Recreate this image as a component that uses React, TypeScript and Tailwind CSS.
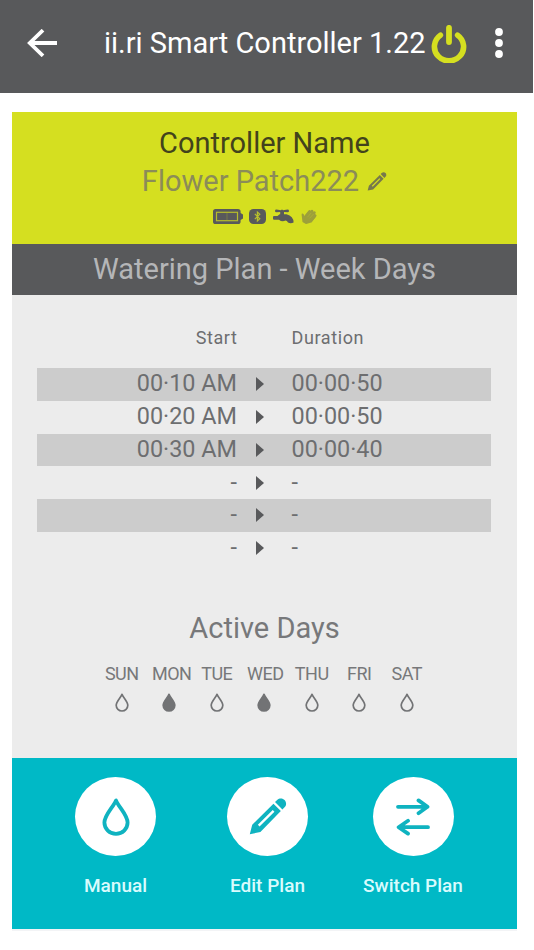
import React from "react";

const plan = [
  { start: "00·10 AM", duration: "00·00·50" },
  { start: "00·20 AM", duration: "00·00·50" },
  { start: "00·30 AM", duration: "00·00·40" },
  { start: "-", duration: "-" },
  { start: "-", duration: "-" },
  { start: "-", duration: "-" },
];

const days = [
  { name: "SUN", active: false, pad: "" },
  { name: "MON", active: true, pad: "pl-[5px]" },
  { name: "TUE", active: false, pad: "" },
  { name: "WED", active: true, pad: "pl-[2px]" },
  { name: "THU", active: false, pad: "" },
  { name: "FRI", active: false, pad: "" },
  { name: "SAT", active: false, pad: "" },
];

function Pencil({ className }: { className: string }) {
  return (
    <svg viewBox="0 0 38 38" className={className} fill="currentColor">
      <path
        fillRule="evenodd"
        d="M0.3 37.2 L2.8 27.4 L24.6 5.8 L32.2 13.4 L11.2 35 Z M8.6 27.6 L10.3 29.3 L25.6 14.1 L23.9 12.4 Z"
      />
      <path d="M26.2 4.2 L28.4 2 C31 -0.4 34.4 0.4 36 2 C37.8 3.8 38.4 7 36 9.6 L33.8 11.8 Z" />
    </svg>
  );
}

function Drop({ active }: { active: boolean }) {
  return (
    <svg
      viewBox="0 0 14 19"
      className="mt-[7px] h-[19px] w-[14px]"
      fill={active ? "#727375" : "none"}
      stroke="#727375"
      strokeWidth="1.7"
      strokeLinejoin="round"
    >
      <path d="M7 1.3 C5.6 5 1.2 8.6 1.2 12.3 A5.8 5.7 0 0 0 12.8 12.3 C12.8 8.6 8.4 5 7 1.3 Z" />
    </svg>
  );
}

function StatusIcons() {
  return (
    <div className="flex h-[16px] items-center text-[#58595b]">
      <svg viewBox="0 0 30 15" className="h-[15px] w-[30px]" fill="currentColor">
        <path d="M2.5 0 H25 Q27.6 0 27.6 2.6 V4 L30 5.4 V9.6 L27.6 11 V12.4 Q27.6 15 25 15 H2.5 Q0 15 0 12.4 V2.6 Q0 0 2.5 0 Z" />
        <rect
          x="3.5"
          y="3.3"
          width="21"
          height="8.4"
          fill="none"
          stroke="#b5bc2c"
          strokeWidth="1.2"
        />
        <path d="M14 4 V11" stroke="#7d8046" strokeWidth="0.8" />
      </svg>
      <svg viewBox="0 0 17 15" className="ml-[6.5px] h-[15px] w-[17px]">
        <rect width="17" height="15" rx="4.5" fill="currentColor" />
        <path
          d="M5.8 4.8 L10.8 9.8 L8.4 12 V3 L10.8 5.2 L5.8 10.2"
          fill="none"
          stroke="#b9c02c"
          strokeWidth="1.2"
        />
      </svg>
      <svg
        viewBox="0 0 21 15"
        className="ml-[6.5px] h-[15px] w-[21px]"
        fill="currentColor"
      >
        <path d="M2 2 Q2 0.6 3.5 0.6 L8 1.2 Q9 0 10 1.2 L14.5 0.6 Q16 0.6 16 2 Q16 3.2 14.5 3.2 L11 3 V5.2 H13.5 Q20.5 7 20.6 13.5 Q17.5 15 15 13.4 Q14 11.6 12.5 11.6 Q9 13.4 6 10.8 H1 Q0 10.8 0 9.8 V8 Q0 7 1 7 H4.5 L6.6 5.2 H7.2 V3 L3.5 3.2 Q2 3.2 2 2 Z" />
      </svg>
      <svg
        viewBox="0 0 17 16"
        className="ml-[6px] h-[16px] w-[17px]"
        fill="#9da03a"
        stroke="#9da03a"
        strokeWidth="2.6"
        strokeLinecap="round"
        strokeLinejoin="round"
      >
        <path d="M2.6 5.6 L4.6 8.6 L9.6 2.6 L14 4 L14.6 8 L11 12.6 L6 14 L3.4 12.4 Z" strokeWidth="2" />
        <path d="M6.4 6.4 L9.6 2.4 M9 6 L12 2 M12 7 L14.4 3.6 M12 10 L15.2 6.6" />
        <path d="M7.6 8 L11 4.2 M9.8 9 L13.2 5.4" stroke="#b5b934" strokeWidth="0.6" />
      </svg>
    </div>
  );
}

function Action({
  label,
  className,
  children,
}: {
  label: React.ReactNode;
  className: string;
  children: React.ReactNode;
}) {
  return (
    <button className={`flex flex-col items-center ${className}`}>
      <span className="flex h-[79px] w-[81px] items-center justify-center rounded-[50%] bg-white text-[#0fb3c0]">
        {children}
      </span>
      <span className="mt-[18px] text-[19px] leading-6 font-medium whitespace-nowrap text-[#d9fbfd]">
        {label}
      </span>
    </button>
  );
}

export default function App() {
  return (
    <div className="h-[950px] w-[534px] overflow-hidden bg-white font-['Roboto',sans-serif]">
      <header className="flex h-[93px] w-[533px] items-center bg-[#58595b] pb-[8px] pl-[27px]">
        <svg
          viewBox="0 0 30 28"
          className="h-[28px] w-[30px]"
          fill="none"
          stroke="white"
          strokeWidth="3.8"
        >
          <path d="M30 14 H3 M16 1.2 L2.8 14 L16 26.8" />
        </svg>
        <h1 className="ml-[47px] w-[323px] text-[29px] leading-9 whitespace-nowrap text-white">
          ii.ri Smart Controller 1.22
        </h1>
        <svg
          viewBox="0 0 36 38"
          className="ml-[4px] mt-[2px] h-[38px] w-[36px]"
          fill="none"
          stroke="#d5df20"
          strokeLinecap="round"
        >
          <path d="M9.4 10.2 A14.6 14.2 0 1 0 26.6 10.2" strokeWidth="5.6" />
          <path d="M18 2.8 V17" strokeWidth="5.8" />
        </svg>
        <svg viewBox="0 0 8 30" className="ml-[28px] h-[30px] w-[8px]" fill="white">
          <circle cx="4" cy="4" r="3.9" />
          <circle cx="4" cy="15" r="3.9" />
          <circle cx="4" cy="26" r="3.9" />
        </svg>
      </header>

      <main className="mt-[19px] ml-[12px] w-[505px]">
        <section className="flex h-[131.5px] flex-col items-center bg-[#d5df20] pt-[11.6px]">
          <h2 className="text-[29px] leading-[38px] text-[#42431c]">Controller Name</h2>
          <div className="flex items-center gap-[8px] text-[29px] leading-[38px] text-[#8b8c58]">
            <span>Flower Patch222</span>
            <Pencil className="mt-[1px] h-[19px] w-[20px] text-[#77784c]" />
          </div>
          <div className="mt-[9px]">
            <StatusIcons />
          </div>
        </section>

        <h2 className="h-[51px] bg-[#58595b] text-center text-[29px] leading-[50px] text-[#b5b6b8]">
          Watering Plan - Week Days
        </h2>

        <section className="h-[463px] bg-[#ececec] px-[25px] pt-[31.5px] text-[#6d6e70]">
          <div className="flex text-[18px] leading-6 tracking-[0.6px]">
            <span className="w-[200.5px] text-right">Start</span>
            <span className="ml-[54px]">Duration</span>
          </div>
          <div className="mt-[18px] w-[454px]">
            {plan.map((row, i) => (
              <div
                key={i}
                className="flex h-[32.75px] items-center text-[23.4px] leading-[30px] odd:bg-[#cccccc]"
              >
                <span className="w-[200px] pb-[2px] text-right">{row.start}</span>
                <svg
                  viewBox="0 0 8 14"
                  className="ml-[19px] h-[14px] w-[8px]"
                  fill="#58595b"
                >
                  <path d="M0 0 L8 7 L0 14 Z" />
                </svg>
                <span className="ml-[27.5px] pb-[2px]">{row.duration}</span>
              </div>
            ))}
          </div>

          <h3 className="mt-[44px] text-center text-[29px] leading-[38px] text-[#77787a]">
            Active Days
          </h3>
          <div className="mt-[15px] ml-[61px] flex text-[#77787a]">
            {days.map((day) => (
              <div key={day.name} className="flex w-[47.5px] flex-col items-center">
                <span className={`text-[18px] leading-6 tracking-[-0.5px] ${day.pad}`}>
                  {day.name}
                </span>
                <Drop active={day.active} />
              </div>
            ))}
          </div>
        </section>

        <nav className="flex h-[171px] bg-[#00b9c6] pt-[19.5px]">
          <Action label="Manual" className="ml-[43px] w-[121px]">
            <svg
              viewBox="0 0 28 38"
              className="h-[38px] w-[28px]"
              fill="none"
              stroke="currentColor"
              strokeWidth="3.8"
              strokeLinejoin="round"
            >
              <path d="M14 2.4 C11 9.5 2.4 17 2.4 24.6 A11.6 11.2 0 0 0 25.6 24.6 C25.6 17 17 9.5 14 2.4 Z" />
            </svg>
          </Action>
          <Action label="Edit Plan" className="ml-[31px] w-[121px]">
            <Pencil className="h-[37px] w-[38px]" />
          </Action>
          <Action label="Switch Plan" className="ml-[24.5px] w-[121px]">
            <svg
              viewBox="0 0 34 38"
              className="h-[38px] w-[34px]"
              fill="none"
              stroke="currentColor"
              strokeWidth="3.8"
              strokeLinecap="round"
              strokeLinejoin="round"
            >
              <path d="M2 8.8 H31 M22.5 2.4 L31.5 8.8 L22.5 15.2" />
              <path d="M32 29.2 H3 M12 22.8 L2.6 29.2 L12 35.6" />
            </svg>
          </Action>
        </nav>
        <div className="h-[2px] bg-[#f3f4f6]" />
      </main>
    </div>
  );
}
